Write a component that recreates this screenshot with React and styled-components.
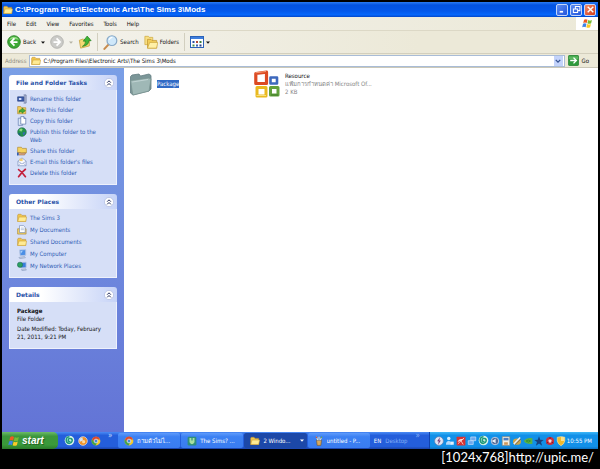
import React from 'react'
import styled, { createGlobalStyle, css } from 'styled-components'

const GlobalStyle = createGlobalStyle`
  * {
    box-sizing: border-box;
  }

  body {
    margin: 0;
    background: #000;
    font-family: "DejaVu Sans Condensed", "DejaVu Sans", "Noto Sans", sans-serif;
    font-size: 6px;
    line-height: 8px;
    color: #111;
  }

  button, input {
    font: inherit;
    color: inherit;
    padding: 0;
    border: 0;
    background: none;
  }

  button {
    cursor: pointer;
  }

  svg {
    display: block;
    flex-shrink: 0;
  }

  h1, h2, p, ul {
    margin: 0;
    padding: 0;
  }
`

/* ---------- icons ---------- */

const Svg = ({ size = 10, width, children, box = '0 0 16 16' }) => (
  <svg width={width || size} height={size} viewBox={box} fill="none" aria-hidden="true">
    {children}
  </svg>
)

const FolderIcon = ({ size }) => (
  <Svg size={size}>
    <path d="M1 3.500 2 2h4.500l1.500 1.800H14V13.500H1z" fill="#f0c64c" stroke="#b8892a" strokeWidth=".8" />
    <path d="M1.200 13.500 3.200 6.500H15.400L13.800 13.500z" fill="#ffeb94" stroke="#c79b32" strokeWidth=".8" />
  </Svg>
)

const BigFolderIcon = () => (
  <Svg size={24} box="0 0 24 24">
    <path d="M1.500 4.500 3 3l7-1 1.500 2L20 2l2 1.500V17l-2 2L4 23l-2.500-2z" fill="#7b9698" stroke="#637d82" strokeWidth=".8" />
    <path d="M1.500 8.500 19.500 6l2.500.8L20 19 3.800 23z" fill="#9fb8b6" stroke="#78928f" strokeWidth=".7" />
    <path d="M3.200 10 19 7.500" stroke="#c9dadb" strokeWidth=".8" />
  </Svg>
)

const OfficeIcon = () => (
  <Svg size={28} box="0 0 28 28">
    <path d="M2.800 3.500 13.500 2.200v11.300H2.800z" stroke="#dc4a22" strokeWidth="3.200" strokeLinejoin="round" />
    <path d="M17.500 7.500h6.500v6h-6.500z" stroke="#3d68bd" strokeWidth="2.600" strokeLinejoin="round" />
    <path d="M4 17.500h9V26H4z" stroke="#e9b91f" strokeWidth="3" strokeLinejoin="round" />
    <path d="M17.500 17.500h7.500V25h-7.500z" stroke="#62a03c" strokeWidth="3" strokeLinejoin="round" />
    <path d="M2.500 2.800 13 1.500" stroke="#f49a75" />
    <path d="M3.500 25.500h9.500" stroke="#f8e07a" />
    <path d="M18 25h7" stroke="#3c7a29" />
  </Svg>
)

const FlagIcon = ({ size = 11 }) => (
  <Svg size={size}>
    <path d="M3 2.500q2.500-1.500 5 0L6.800 7.300q-2.500-1.500-5 0z" fill="#ee5a24" />
    <path d="M9 2.800q2.500 1.500 5.500 0L13.300 7.600q-3 1.500-5.500 0z" fill="#78bb35" />
    <path d="M1.500 8.500q2.500-1.500 5 0L5.300 13.300q-2.500-1.500-5 0z" fill="#3f83e8" />
    <path d="M7.500 8.800q2.500 1.500 5.500 0L11.800 13.600q-3 1.500-5.500 0z" fill="#fbc928" />
  </Svg>
)

const BackIcon = () => (
  <Svg size={14}>
    <circle cx="8" cy="8" r="7.200" fill="#3da935" stroke="#2a8426" />
    <path d="M2.500 5.500a6 6 0 0 1 11 0q-5.500-2-11 0z" fill="#8fda7e" />
    <path d="M8.500 3.800 4.500 8l4 4.200M4.500 8h7.500" stroke="#fff" strokeWidth="2" />
  </Svg>
)

const ForwardIcon = () => (
  <Svg size={14}>
    <circle cx="8" cy="8" r="7.200" fill="#cbcbc8" stroke="#b0b0ac" />
    <path d="M7.500 3.800 11.500 8l-4 4.200M11.500 8H4" stroke="#fff" strokeWidth="2" />
  </Svg>
)

const UpIcon = () => (
  <Svg size={14}>
    <path d="M1.500 6 6 4.500l1 1 6-1.500v8.500L3 15z" fill="#f5d974" stroke="#c39b38" strokeWidth=".8" />
    <path d="M5 13q4-2 3.600-6H6L10.500 1.200 15 6.500h-2.800Q12.500 12 5 13z" fill="#3fb535" stroke="#23801f" strokeWidth=".8" />
  </Svg>
)

const SearchIcon = () => (
  <Svg size={15}>
    <path d="M6 10 1.500 14.800" stroke="#c78a4c" strokeWidth="2.200" strokeLinecap="round" />
    <circle cx="9.500" cy="6" r="5.200" fill="#cfe8fa" stroke="#87a9c8" strokeWidth="1.300" />
    <path d="M6.500 5q1-2.500 3.500-2.500" stroke="#fff" strokeWidth="1.300" />
  </Svg>
)

const FoldersIcon = () => (
  <Svg size={14}>
    <path d="M1 1.500h4l1 1.200h4V11H1z" fill="#f8df83" stroke="#cda83f" strokeWidth=".8" />
    <path d="M4 5h4l1 1.200h5.500V15H4z" fill="#f3cd59" stroke="#bf9430" strokeWidth=".8" />
    <path d="M4 15 6.500 8.500h9.300L14.300 15z" fill="#fff0a6" stroke="#cda83f" strokeWidth=".8" />
  </Svg>
)

const ViewsIcon = () => (
  <Svg size={12} width={14} box="0 0 14 12">
    <rect x=".5" y=".5" width="13" height="11" fill="#fff" stroke="#2b62b8" />
    <path d="M1 2h12" stroke="#3f7fdd" strokeWidth="2" />
    <path d="M2.500 5h2v2h-2z" fill="#2a4fa5" />
    <path d="M6 5h2v2H6z" fill="#b24c38" />
    <path d="M9.500 5h2v2h-2z" fill="#397e3c" />
    <path d="M2.500 8.500h2v2h-2z" fill="#4b9148" />
    <path d="M6 8.500h2v2H6z" fill="#3c62b2" />
    <path d="M9.500 8.500h2v2h-2z" fill="#253c7f" />
  </Svg>
)

const Caret = ({ color = '#111' }) => (
  <Svg size={3} width={4} box="0 0 4 3">
    <path d="M0 .5h4L2 2.700z" fill={color} />
  </Svg>
)

const GoIcon = () => (
  <Svg size={11}>
    <rect x=".5" y=".5" width="15" height="15" rx="2" fill="#2f9a3c" stroke="#1f7a2c" />
    <path d="M1.500 2h13v4h-13z" fill="#5bb85f" />
    <path d="M8 3.800 12.200 8 8 12.200M12 8H3.200" stroke="#fff" strokeWidth="2" />
  </Svg>
)

const ChevronDown = () => (
  <Svg size={6}>
    <path d="M2 5l6 6 6-6" stroke="#33508f" strokeWidth="3.500" />
  </Svg>
)

const CollapseIcon = () => (
  <Svg size={10}>
    <circle cx="8" cy="8" r="7.300" fill="#fff" stroke="#a9b6dc" />
    <path d="M5 7.500l3-3 3 3M5 11.800l3-3 3 3" stroke="#27315f" strokeWidth="1.600" />
  </Svg>
)

const RenameIcon = () => (
  <Svg>
    <path d="M1 4.500h10v7H1z" fill="#3b5ba9" stroke="#243b7c" />
    <path d="M3 6.500h4v3H3z" fill="#dfe8ff" />
    <path d="M10.500 1.500h4v13h-4M12.500 2v12" stroke="#5d6b94" strokeWidth="1.200" />
  </Svg>
)

const MoveIcon = () => (
  <Svg>
    <path d="M1 2.500h5l1.500 1.800H14V14H1z" fill="#f1cc58" stroke="#b4882a" />
    <path d="M3 12q0-5 5-5V4.800L13.500 9 8 13.200V11q-3-.5-5 1z" fill="#43ab3a" stroke="#237b21" strokeWidth=".8" />
  </Svg>
)

const CopyIcon = () => (
  <Svg>
    <path d="M2 3.500h7V15H2z" fill="#dbe6f7" stroke="#5672a8" />
    <path d="M6 1h5l3 3v9H6z" fill="#fff" stroke="#46639e" />
    <path d="M11 1v3h3" stroke="#46639e" />
  </Svg>
)

const GlobeIcon = () => (
  <Svg>
    <circle cx="8" cy="8" r="7" fill="#25924c" stroke="#1b5f4a" strokeWidth=".8" />
    <path d="M4 3.500q3-2 5 0L7.500 7 4 6.500z" fill="#8edb7a" />
    <path d="M9 9l4-1q.5 3-3 5.500z" fill="#3569b5" />
    <path d="M2 9l3 1 .5 3.500Q2.500 12 2 9z" fill="#165f87" />
  </Svg>
)

const ShareIcon = () => (
  <Svg>
    <path d="M1 2h6l1.500 1.800H15V11H1z" fill="#f6d35f" stroke="#ab832b" />
    <path d="M1 11.500q4-2.500 6 0l7-.5-2 3.500H3z" fill="#dba679" stroke="#7b5642" strokeWidth=".7" />
    <path d="M0 10.500h2.500V15H0z" fill="#2f5fb9" />
  </Svg>
)

const MailIcon = () => (
  <Svg>
    <path d="M1.500 6.500 8 1.500l6.500 5V14h-13z" fill="#f7f9ff" stroke="#6f87b8" />
    <path d="M1.500 7 8 11l6.500-4M1.500 14 6 9.800M14.500 14 10 9.800" stroke="#7d93c0" strokeWidth=".9" />
    <path d="M4 2.500h5v4H4z" fill="#f0cf6e" />
  </Svg>
)

const DeleteIcon = () => (
  <Svg>
    <path d="M2.500 2.500q6 4 11 11.500M13.500 2Q7 7 2.500 14" stroke="#c3203c" strokeWidth="2.600" strokeLinecap="round" />
  </Svg>
)

const DocumentsIcon = () => (
  <Svg>
    <path d="M1 6h13.500v8.500H1z" fill="#f2d26a" stroke="#a9852f" />
    <path d="M4 1h6.500L13 3.500V12H4z" fill="#fff" stroke="#7088b3" />
    <path d="M6 5h5M6 7.500h5" stroke="#8ba2c9" />
  </Svg>
)

const ComputerIcon = () => (
  <Svg>
    <path d="M4 1.500 14 1v9l-9 .8z" fill="#4b8fe6" stroke="#b6c6e2" strokeWidth="1.400" />
    <path d="M5.500 3l4-.3-3.500 5z" fill="#a9d2fb" />
    <path d="M3 13.500 12 12l1.500 2-9 1.500z" fill="#c8d3e6" stroke="#7287af" strokeWidth=".7" />
  </Svg>
)

const NetworkIcon = () => (
  <Svg>
    <path d="M5.500 2.500 14.500 2v8.500l-8 .5z" fill="#3a7fdd" stroke="#a9bcde" strokeWidth="1.300" />
    <circle cx="4.800" cy="6" r="4.200" fill="#2ca161" stroke="#1c6152" strokeWidth=".8" />
    <path d="M7 13.500 14 12.500l1 2-7 1z" fill="#c8d3e6" stroke="#7287af" strokeWidth=".7" />
  </Svg>
)

const ChromeIcon = () => (
  <Svg>
    <circle cx="8" cy="8" r="7" fill="#f2c92c" />
    <path d="M1.600 5A7 7 0 0 1 14.500 5.500H8L5 9z" fill="#dd4a32" />
    <path d="M1.600 5A7 7 0 0 0 7.500 15L10 10 5 9z" fill="#46a348" />
    <circle cx="8" cy="8" r="3" fill="#4588dc" stroke="#fff" />
  </Svg>
)

const SwirlIcon = () => (
  <Svg size={11}>
    <circle cx="8" cy="8" r="7" fill="#d9f3e8" />
    <path d="M9.500 9.500Q6 10 6.200 7.300T10 5q2.500 1 1.800 4T7.500 12.500Q3 11.500 3.200 7T8 2.500" stroke="#1f9a7a" strokeWidth="2.200" />
  </Svg>
)

const PlayerIcon = () => (
  <Svg>
    <circle cx="8" cy="8" r="7" fill="#f09329" stroke="#dfe9f7" />
    <path d="M2 4.500 7 2l1 5-5 2z" fill="#cfe3f8" />
    <circle cx="9" cy="9" r="2.500" fill="#fbd9a0" />
  </Svg>
)

const SimsIcon = () => (
  <Svg>
    <rect x="1" y="1" width="14" height="14" rx="2" fill="#2f8f7d" />
    <path d="M4 3h3v4h2V3h3v7q-2 3-4 3t-4-3z" fill="#a8e0a0" />
  </Svg>
)

const PaintIcon = () => (
  <Svg>
    <path d="M4 7h8l-1 8H5z" fill="#d7a95e" stroke="#6e5333" />
    <path d="M6 7 4 1M8 7V1M10 7l2-5" stroke="#f0e3bd" strokeWidth="1.600" />
    <path d="M3 1h2v2H3z" fill="#d5482b" />
    <path d="M11 1h2v2h-2z" fill="#68a83b" />
  </Svg>
)

const BoltIcon = () => (
  <Svg>
    <circle cx="8" cy="8" r="7" fill="#dfe6f4" stroke="#6d7fae" />
    <path d="M9.500 2 5 8.500h2.500L6.500 14 11 7H8.500z" fill="#7a3a78" />
  </Svg>
)

const UserIcon = () => (
  <Svg>
    <circle cx="6" cy="4" r="2.800" fill="#d4ecff" />
    <path d="M1.500 14q0-6 4.500-6t4.500 6z" fill="#b4d9fb" />
    <path d="M9 9h5v5H9z" fill="#e3f2ff" />
  </Svg>
)

const AntivirusIcon = () => (
  <Svg>
    <rect x="1" y="1" width="14" height="14" rx="1" fill="#d63333" />
    <path d="M2.500 9.500Q5 2.500 12.500 5.500z" fill="#fbe3df" />
    <path d="M7.500 7l4 6.500M3 12.500l10-9.500" stroke="#fbe3df" strokeWidth="1.300" />
  </Svg>
)

const MonitorsIcon = () => (
  <Svg>
    <path d="M6 1.500h8v6H6z" fill="#6fa8ec" stroke="#d9e9fb" />
    <path d="M2 7.500h8v6H2z" fill="#6fa8ec" stroke="#d9e9fb" />
  </Svg>
)

const SpeakerIcon = () => (
  <Svg>
    <circle cx="8" cy="8" r="6" fill="#536b97" stroke="#c3cfe2" strokeWidth="1.500" />
    <path d="M4 6.500h2L9 4v8L6 9.500H4z" fill="#e7edf7" />
  </Svg>
)

const DiskIcon = () => (
  <Svg>
    <path d="M2 1h12v14H2z" fill="#f2efe4" stroke="#8b8370" />
    <path d="M4 3h8v4H4z" fill="#4d7cbf" />
    <path d="M5 10h6v4H5z" fill="#cf975a" />
  </Svg>
)

const PenIcon = () => (
  <Svg>
    <ellipse cx="8" cy="9" rx="6.500" ry="5" fill="#caa44a" />
    <path d="M3 13 13 2.500" stroke="#e9eef7" strokeWidth="2.500" />
    <path d="M5 13.500 14 5" stroke="#4a4a4a" />
  </Svg>
)

const NvidiaIcon = () => (
  <Svg>
    <path d="M1 8q5-6 14-4.500v9Q6 14 1 8z" fill="#57b346" />
    <path d="M5 8q3-3 7 0-3 3.500-7 0z" stroke="#2b7f2c" />
  </Svg>
)

const StarIcon = () => (
  <Svg>
    <path d="M8 .5 10 6l5.500.2-4.300 3.500L13 15.500 8 12l-5 3.500 1.800-5.800L.5 6.200 6 6z" fill="#16417f" />
  </Svg>
)

const RedDiscIcon = () => (
  <Svg>
    <circle cx="8" cy="8" r="6.500" fill="#c9303c" />
    <circle cx="8" cy="8" r="2.800" fill="#f4d9d9" />
    <path d="M8 1.500V5M2.500 11.500l3-2M13.500 11.500l-3-2" stroke="#7c1825" strokeWidth="1.500" />
  </Svg>
)

const ShieldIcon = () => (
  <Svg>
    <path d="M2 2q6-2 12 0v6q-1 5-6 7.500Q3 13 2 8z" fill="#f2b929" stroke="#f9e7a6" />
    <path d="M8 1.500q3-.5 5.500.5v6H8z" fill="#fbe08a" />
  </Svg>
)

/* ---------- data ---------- */

const menus = ['File', 'Edit', 'View', 'Favorites', 'Tools', 'Help']

const tasks = [
  { icon: RenameIcon, label: 'Rename this folder' },
  { icon: MoveIcon, label: 'Move this folder' },
  { icon: CopyIcon, label: 'Copy this folder' },
  { icon: GlobeIcon, label: 'Publish this folder to the Web' },
  { icon: ShareIcon, label: 'Share this folder' },
  { icon: MailIcon, label: "E-mail this folder's files" },
  { icon: DeleteIcon, label: 'Delete this folder' },
]

const places = [
  { icon: FolderIcon, label: 'The Sims 3' },
  { icon: DocumentsIcon, label: 'My Documents' },
  { icon: FolderIcon, label: 'Shared Documents' },
  { icon: ComputerIcon, label: 'My Computer' },
  { icon: NetworkIcon, label: 'My Network Places' },
]

const openWindows = [
  { icon: ChromeIcon, label: 'ถามตัวไม่ไ...' },
  { icon: SimsIcon, label: 'The Sims? ...' },
  { icon: FolderIcon, label: '2 Windo...', active: true },
  { icon: PaintIcon, label: 'untitled - P...' },
]

const trayIcons = [
  BoltIcon, UserIcon, AntivirusIcon, MonitorsIcon, SwirlIcon, SpeakerIcon,
  DiskIcon, PenIcon, NvidiaIcon, StarIcon, RedDiscIcon, ShieldIcon,
]

/* ---------- app ---------- */

const TaskPanel = ({ title, children }) => (
  <section>
    <PanelHeader>
      <h2>{title}</h2>
      <button aria-label={`Collapse ${title}`}><CollapseIcon /></button>
    </PanelHeader>
    <PanelBody>{children}</PanelBody>
  </section>
)

const LinkList = ({ items, gap }) => (
  <Links $gap={gap}>
    {items.map(({ icon: Icon, label }) => (
      <li key={label}>
        <Icon />
        <a href="#">{label}</a>
      </li>
    ))}
  </Links>
)

const App = () => {
  return (
    <Screen>
      <GlobalStyle />
      <Desktop>
        <TitleBar>
          <FolderIcon size={10} />
          <h1>C:\Program Files\Electronic Arts\The Sims 3\Mods</h1>
          <WindowButtons>
            <WindowButton aria-label="Minimize">
              <Svg size={9}><path d="M3 12h6" stroke="#fff" strokeWidth="3" /></Svg>
            </WindowButton>
            <WindowButton aria-label="Restore">
              <Svg size={9}><path d="M6 6V2.500h8V10h-3M2.500 7H10v6.500H2.500z" stroke="#fff" strokeWidth="1.800" /></Svg>
            </WindowButton>
            <WindowButton $close aria-label="Close">
              <Svg size={9}><path d="M3 3l10 10M13 3 3 13" stroke="#fff" strokeWidth="2.500" /></Svg>
            </WindowButton>
          </WindowButtons>
        </TitleBar>

        <MenuBar>
          {menus.map((menu) => <button key={menu}>{menu}</button>)}
          <Brand><FlagIcon /></Brand>
        </MenuBar>

        <ToolBar>
          <ToolButton><BackIcon />Back</ToolButton>
          <ToolButton aria-label="Back history"><Caret /></ToolButton>
          <ToolButton aria-label="Forward"><ForwardIcon /></ToolButton>
          <ToolButton aria-label="Forward history"><Caret color="#b5b3a6" /></ToolButton>
          <ToolButton aria-label="Up"><UpIcon /></ToolButton>
          <Divider />
          <ToolButton><SearchIcon />Search</ToolButton>
          <ToolButton><FoldersIcon />Folders</ToolButton>
          <Divider />
          <ToolButton aria-label="Views"><ViewsIcon /><Caret /></ToolButton>
        </ToolBar>

        <AddressBar>
          <label htmlFor="address">Address</label>
          <AddressField>
            <FolderIcon size={10} />
            <input id="address" defaultValue="C:\Program Files\Electronic Arts\The Sims 3\Mods" />
            <DropButton aria-label="Show addresses"><ChevronDown /></DropButton>
          </AddressField>
          <GoButton><GoIcon />Go</GoButton>
        </AddressBar>

        <Main>
          <Sidebar>
            <TaskPanel title="File and Folder Tasks">
              <LinkList items={tasks} gap={3} />
            </TaskPanel>
            <TaskPanel title="Other Places">
              <LinkList items={places} gap={4} />
            </TaskPanel>
            <TaskPanel title="Details">
              <Details>
                <strong>Package</strong>
                <p>File Folder</p>
                <p>Date Modified: Today, February 21, 2011, 9:21 PM</p>
              </Details>
            </TaskPanel>
          </Sidebar>
          <Files>
            <File>
              <BigFolderIcon />
              <FileName $selected>Package</FileName>
            </File>
            <File>
              <OfficeIcon />
              <FileText>
                <FileName>Resource</FileName>
                <p>แฟ้มการกำหนดค่า Microsoft Of...</p>
                <p>2 KB</p>
              </FileText>
            </File>
          </Files>
        </Main>

        <TaskBar>
          <StartButton><FlagIcon size={12} />start</StartButton>
          <QuickLaunch>
            <button aria-label="Messenger"><SwirlIcon /></button>
            <button aria-label="Media player"><PlayerIcon /></button>
            <button aria-label="Chrome"><ChromeIcon /></button>
            <More>»</More>
          </QuickLaunch>
          <Windows>
            {openWindows.map(({ icon: Icon, label, active }) => (
              <WindowTab key={label} $active={active}>
                <Icon />
                <span>{label}</span>
                {active && <Caret color="#fff" />}
              </WindowTab>
            ))}
          </Windows>
          <Language>
            <button>EN</button>
            <span>Desktop</span>
            <More>»</More>
          </Language>
          <Tray>
            {trayIcons.map((Icon, i) => <Icon key={i} />)}
            <time>10:55 PM</time>
          </Tray>
        </TaskBar>
      </Desktop>
      <Caption>[1024x768]http://upic.me/</Caption>
    </Screen>
  )
}

const Screen = styled.div`
  display: flex;
  flex-direction: column;
  min-height: 100vh;
  padding: 2px 2px 0;
`

const Desktop = styled.div`
  display: flex;
  flex-direction: column;
  flex: 1;
  background: #ece9d8;
`

const TitleBar = styled.header`
  display: flex;
  align-items: center;
  gap: 2px;
  height: 15px;
  padding: 0 2px 0 1px;
  background: linear-gradient(#2a7df5, #0453e0 20%, #0458ea 60%, #0667fb 85%, #0346c8);

  h1 {
    flex: 1;
    font-family: "Liberation Sans", sans-serif;
    font-size: 8px;
    line-height: 12px;
    font-weight: bold;
    color: #fff;
  }
`

const WindowButtons = styled.div`
  display: flex;
  gap: 2px;
`

const WindowButton = styled.button`
  display: grid;
  place-items: center;
  width: 12px;
  height: 12px;
  border: 1px solid #c4d6fa;
  border-radius: 2px;
  background: ${({ $close }) => ($close ? 'linear-gradient(135deg, #f0896b, #d63c17)' : 'linear-gradient(135deg, #5c8df2, #2355dc)')};
`

const MenuBar = styled.nav`
  display: flex;
  align-items: center;
  gap: 10px;
  height: 14px;
  padding-left: 5px;
  background: linear-gradient(90deg, #f2f1eb, #ece9d8);
  border-bottom: 1px solid #dcd8c6;
`

const Brand = styled.div`
  display: grid;
  place-items: center;
  width: 22px;
  height: 13px;
  margin-left: auto;
  background: #fff;
`

const ToolBar = styled.div`
  display: flex;
  align-items: center;
  gap: 5px;
  height: 23px;
  padding-left: 5px;
  background: linear-gradient(90deg, #f4f3ee, #ece9d8 70%);
  border-bottom: 1px solid #d3cfbd;
`

const ToolButton = styled.button`
  display: flex;
  align-items: center;
  gap: 2px;
`

const Divider = styled.span`
  width: 1px;
  height: 18px;
  background: #d2cfbf;
`

const AddressBar = styled.div`
  display: flex;
  align-items: center;
  gap: 3px;
  height: 14px;
  padding: 0 9px 0 3px;
  border-bottom: 1px solid #cbc8b8;

  label {
    color: #8d8b80;
  }
`

const AddressField = styled.div`
  display: flex;
  align-items: center;
  flex: 1;
  gap: 2px;
  height: 12px;
  padding: 0 1px;
  border: 1px solid #a9bcd6;
  background: #fff;

  input {
    flex: 1;
    min-width: 0;
    outline: none;
  }
`

const DropButton = styled.button`
  display: grid;
  place-items: center;
  width: 9px;
  height: 10px;
  background: #c3d3fb;
`

const GoButton = styled.button`
  display: flex;
  align-items: center;
  gap: 3px;
`

const Main = styled.main`
  display: flex;
  flex: 1;
  background: #fff;
`

const Sidebar = styled.aside`
  display: flex;
  flex-direction: column;
  gap: 9px;
  width: 122px;
  padding: 7px;
  background: linear-gradient(#7a9fe6, #6374d6);
`

const PanelHeader = styled.div`
  display: flex;
  align-items: center;
  justify-content: space-between;
  height: 15px;
  padding: 0 3px 0 7px;
  border-radius: 3px 3px 0 0;
  background: linear-gradient(90deg, #fff 30%, #c6d3f7);

  h2 {
    font-family: "DejaVu Sans", sans-serif;
    font-size: 6px;
    font-weight: bold;
    color: #2a52a8;
  }
`

const PanelBody = styled.div`
  padding: 5px 7px 7px;
  border: 1px solid #eef1fc;
  border-top: 0;
  background: #d6dff7;
`

const Links = styled.ul`
  display: flex;
  flex-direction: column;
  gap: ${({ $gap }) => $gap}px;
  list-style: none;

  li {
    display: flex;
    align-items: flex-start;
    gap: 3px;
  }

  svg {
    margin: -1px 0;
  }

  a {
    color: #2f5cb5;
    text-decoration: none;
  }
`

const Details = styled.div`
  p + p {
    margin-top: 2px;
  }
`

const Files = styled.section`
  display: grid;
  grid-template-columns: repeat(auto-fill, 124px);
  align-content: start;
  flex: 1;
  padding: 2px 5px;
`

const File = styled.div`
  display: flex;
  align-items: center;
  gap: 4px;
  height: 28px;
  white-space: nowrap;
`

const FileText = styled.div`
  p {
    color: #858585;
  }
`

const FileName = styled.div`
  ${({ $selected }) => $selected && css`
    color: #fff;
    background: #316ac5;
  `}
`

const TaskBar = styled.footer`
  display: flex;
  height: 17px;
  color: #fff;
  background: linear-gradient(#4a8bf5, #245edb 20%, #245edb 85%, #1941a5);
`

const StartButton = styled.button`
  display: flex;
  align-items: center;
  gap: 2px;
  width: 56px;
  padding-left: 6px;
  border-radius: 0 5px 5px 0;
  font-family: "Liberation Sans", sans-serif;
  font-size: 10px;
  font-weight: bold;
  font-style: italic;
  color: #fff;
  text-shadow: 1px 1px 1px #1d5a1d;
  background: linear-gradient(#6cbc68, #3c963c 25%, #3a9a3a 75%, #2a7a2a);
`

const QuickLaunch = styled.div`
  display: flex;
  align-items: center;
  gap: 3px;
  width: 60px;
  padding-left: 6px;
`

const More = styled.span`
  align-self: flex-start;
  padding-left: 4px;
  font-size: 8px;
  color: #c2d8fc;
`

const Windows = styled.div`
  display: flex;
  flex: 1;
  gap: 1px;
  min-width: 0;
`

const WindowTab = styled.button`
  display: flex;
  align-items: center;
  flex: 1;
  gap: 3px;
  min-width: 0;
  margin: 1px 0;
  padding: 0 3px 0 6px;
  border-radius: 2px;
  color: #fff;
  text-align: left;
  white-space: nowrap;
  background: ${({ $active }) => ($active ? '#1c48a8' : 'linear-gradient(#5f9bfb, #3c81f3 25%, #3a7cf0)')};

  span {
    flex: 1;
    overflow: hidden;
  }
`

const Language = styled.div`
  display: flex;
  align-items: center;
  gap: 4px;
  width: 59px;
  padding-left: 4px;

  span {
    color: #86aef5;
  }
`

const Tray = styled.div`
  display: flex;
  align-items: center;
  gap: 1px;
  padding: 0 6px 0 4px;
  border-left: 1px solid #1042af;
  background: linear-gradient(#3fb8f8, #1290e8 20%, #1290e8 85%, #0d6fc0);

  time {
    white-space: nowrap;
  }
`

const Caption = styled.p`
  padding: 0 4px 4px;
  font-family: Lato, sans-serif;
  font-size: 13px;
  line-height: 16px;
  text-align: right;
  color: #fff;
`

export default App
